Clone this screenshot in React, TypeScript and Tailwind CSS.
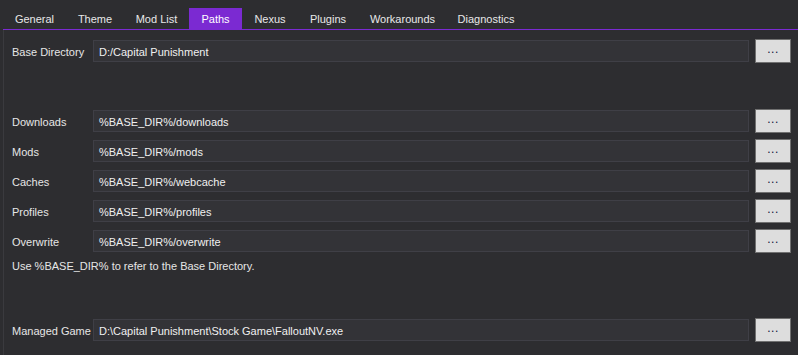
const tabs = [
  { name: "General", w: "w-[63px]" },
  { name: "Theme", w: "w-[58px]" },
  { name: "Mod List", w: "w-[65px]" },
  { name: "Paths", w: "w-[53px]" },
  { name: "Nexus", w: "w-[56px]" },
  { name: "Plugins", w: "w-[60px]" },
  { name: "Workarounds", w: "w-[89px]" },
  { name: "Diagnostics", w: "w-[78px]" },
];

const pathRows = [
  { label: "Downloads", value: "%BASE_DIR%/downloads" },
  { label: "Mods", value: "%BASE_DIR%/mods" },
  { label: "Caches", value: "%BASE_DIR%/webcache" },
  { label: "Profiles", value: "%BASE_DIR%/profiles" },
  { label: "Overwrite", value: "%BASE_DIR%/overwrite" },
];

function PathRow({ label, value }: { label: string; value: string }) {
  return (
    <div className="flex items-center h-[24px]">
      <div className="w-[81px] shrink-0 pt-[2px] whitespace-nowrap text-[#e6e6e6]">{label}</div>
      <div className="w-[656px] h-[22px] shrink-0 flex items-center pt-[2px] px-[5px] whitespace-nowrap bg-[#333337] border border-[#3f3f46] text-[#f0f0f0]">
        {value}
      </div>
      <button className="ml-[6px] w-[36px] h-[24px] shrink-0 bg-[#dddddd] border border-[#707070] text-[#10103a] leading-none flex items-end justify-center pb-[7px] text-[12px] tracking-[0.5px]">
        ...
      </button>
    </div>
  );
}

export default function App() {
  return (
    <div
      className="w-[798px] h-[355px] bg-[#2d2d30] text-[11px] overflow-hidden"
      style={{ fontFamily: '"Liberation Sans", Arial, sans-serif' }}
    >
      {/* tab bar */}
      <div className="h-[29px] flex items-end pl-[3px]">
        {tabs.map((t) => (
          <div
            key={t.name}
            className={`${t.w} h-[21px] flex items-center justify-center pt-px ${
              t.name === "Paths" ? "bg-[#7b2ad2] text-white" : "text-[#e8e8e8]"
            }`}
          >
            {t.name}
          </div>
        ))}
      </div>
      <div className="h-px bg-[#7b2ad2] ml-[3px]" />

      {/* page */}
      <div className="ml-[3px] h-[325px] border-l border-[#3a3a3e] pl-[8px] pt-[9px]">
        <PathRow label="Base Directory" value="D:/Capital Punishment" />

        <div className="mt-[46px] flex flex-col gap-[6px]">
          {pathRows.map((r) => (
            <PathRow key={r.label} label={r.label} value={r.value} />
          ))}
        </div>
        <div className="mt-[5px] h-[16px] flex items-center pt-px text-[#e6e6e6]">
          Use %BASE_DIR% to refer to the Base Directory.
        </div>

        <div className="mt-[44px]">
          <PathRow label="Managed Game" value="D:\Capital Punishment\Stock Game\FalloutNV.exe" />
        </div>
      </div>
    </div>
  );
}
